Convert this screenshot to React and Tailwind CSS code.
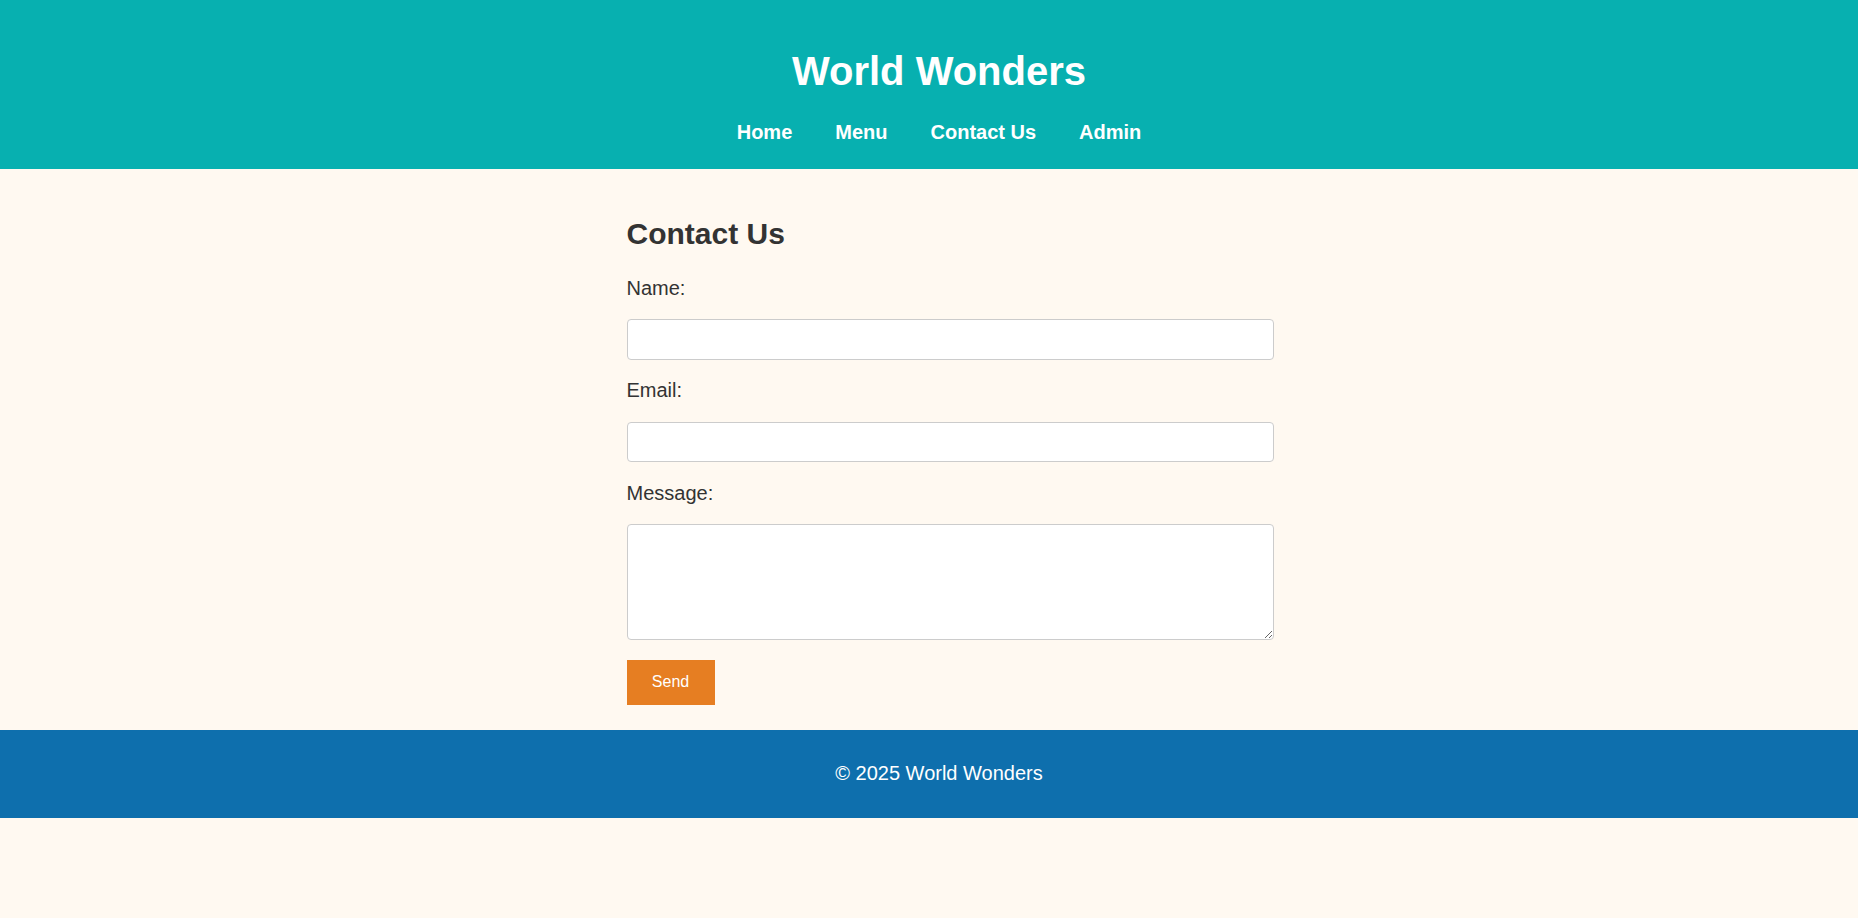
const navLinks = ["Home", "Menu", "Contact Us", "Admin"];

const Header = () => {
    return (
        <header className="w-full bg-[#07b0b0] text-white">
            <div className="pl-[20px] pt-[48px] pb-[25.5px] flex flex-col items-center">
                <h1 className="text-[40px] leading-[46px] font-bold">World Wonders</h1>
                <nav className="mt-[26.5px] flex gap-[43px] text-[20px] leading-[23px] font-bold">
                    {navLinks.map((link) => (
                        <a key={link} href="#" className="text-white hover:underline">
                            {link}
                        </a>
                    ))}
                </nav>
            </div>
        </header>
    );
};

const Field = ({ label, children }) => (
    <>
        <label className="block text-[20px] leading-[23px] text-[#333]">{label}</label>
        {children}
    </>
);

const ContactForm = () => {
    return (
        <main className="pl-[20px] pt-[48.4px] pb-[25px]">
            <div className="w-[625px] mx-auto">
                <h2 className="text-[30px] leading-[34.5px] font-bold text-[#333]">Contact Us</h2>
                <form className="mt-[24.7px] flex flex-col gap-[19.4px]" onSubmit={(e) => e.preventDefault()}>
                    <Field label="Name:">
                        <input type="text" className="w-[647px] h-[40.8px] bg-white border border-[#ccc] rounded-[4px] px-[10px] text-[16px] outline-none" />
                    </Field>
                    <Field label="Email:">
                        <input type="email" className="w-[647px] h-[40.8px] bg-white border border-[#ccc] rounded-[4px] px-[10px] text-[16px] outline-none" />
                    </Field>
                    <Field label="Message:">
                        <textarea className="w-[647px] h-[116px] bg-white border border-[#ccc] rounded-[4px] p-[10px] text-[16px] outline-none resize-y" />
                    </Field>
                    <button type="submit" className="w-[88px] h-[45px] bg-[#e67e22] text-white text-[16px] leading-[18px] cursor-pointer">
                        Send
                    </button>
                </form>
            </div>
        </main>
    );
};

const Footer = () => (
    <footer className="w-full h-[88px] bg-[#0e6fad] text-white flex items-center justify-center pl-[20px]">
        <p className="text-[20px] leading-[23px]">© 2025 World Wonders</p>
    </footer>
);

export default function App() {
    return (
        <div className="min-h-[918px] bg-[#fff9f1] font-['Liberation_Sans',Arial,sans-serif]">
            <Header />
            <ContactForm />
            <Footer />
        </div>
    );
}
